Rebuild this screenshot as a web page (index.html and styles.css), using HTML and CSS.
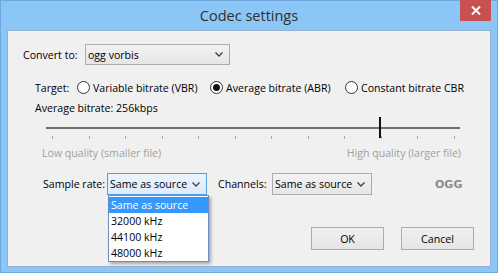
FILE: index.html
```html
<!DOCTYPE html>
<html>
<head>
<meta charset="utf-8">
<link rel="stylesheet" href="styles.css">
</head>
<body>
<div class="window">
  <div class="titlebar">Codec settings</div>
  <div class="close"><svg width="10" height="9" viewBox="0 0 10 9"><path d="M1 0.5 L9 8.5 M9 0.5 L1 8.5" stroke="#fff" stroke-width="2"/></svg></div>
  <div class="client">
    <div class="row convert">
      <span class="conv-label">Convert to:</span>
      <div class="select wide"><span>ogg vorbis</span><svg class="chev" width="8" height="5" viewBox="0 0 8 5"><path d="M0.5 0.5 L4 4 L7.5 0.5" fill="none" stroke="#444" stroke-width="1.4"/></svg></div>
    </div>
    <div class="row target">
      <span class="target-label">Target:</span>
      <label class="opt o1"><span class="radio"></span>Variable bitrate (VBR)</label>
      <label class="opt o2"><span class="radio on"></span>Average bitrate (ABR)</label>
      <label class="opt o3"><span class="radio"></span>Constant bitrate CBR</label>
    </div>
    <div class="row avg">Average bitrate: 256kbps</div>
    <div class="slider">
      <div class="track"></div>
      <div class="thumb"></div>
      <div class="ticks">
        <i></i><i></i><i></i><i></i><i></i><i></i><i></i><i></i><i></i><i></i><i></i><i></i>
      </div>
    </div>
    <div class="row quality">
      <span>Low quality (smaller file)</span>
      <span>High quality (larger file)</span>
    </div>
    <div class="row rates">
      <span class="sr-label">Sample rate:</span>
      <div class="select focus rate">
        <span>Same as source</span><svg class="chev" width="8" height="5" viewBox="0 0 8 5"><path d="M0.5 0.5 L4 4 L7.5 0.5" fill="none" stroke="#444" stroke-width="1.4"/></svg>
        <ul class="dropdown">
          <li class="sel">Same as source</li>
          <li>32000 kHz</li>
          <li>44100 kHz</li>
          <li>48000 kHz</li>
        </ul>
      </div>
      <span class="ch-label">Channels:</span>
      <div class="select rate"><span>Same as source</span><svg class="chev" width="8" height="5" viewBox="0 0 8 5"><path d="M0.5 0.5 L4 4 L7.5 0.5" fill="none" stroke="#444" stroke-width="1.4"/></svg></div>
      <span class="ogg">OGG</span>
    </div>
    <div class="row buttons">
      <div class="btn">OK</div>
      <div class="btn">Cancel</div>
    </div>
  </div>
</div>
</body>
</html>
```
FILE: styles.css
```css
* { box-sizing: border-box; }
html, body { margin: 0; padding: 0; }
body {
  width: 498px;
  height: 273px;
  overflow: hidden;
  font-family: "Open Sans", "Noto Sans", sans-serif;
  font-size: 10.6px;
  color: #000;
  white-space: nowrap;
}
.window {
  position: relative;
  width: 498px;
  height: 273px;
  background: #8cc6f7;
  border: 1px solid #6ea7dc;
  padding: 0 6px 5px 6px;
  display: flex;
  flex-direction: column;
}
.titlebar {
  height: 29px;
  flex: none;
  display: flex;
  align-items: center;
  justify-content: center;
  font-size: 14.5px;
  color: #2f2f2f;
  padding-bottom: 1px;
}
.close {
  position: absolute;
  top: -1px;
  right: 6px;
  width: 31px;
  height: 21px;
  background: #c75050;
  display: flex;
  align-items: center;
  justify-content: center;
}
.close svg { display: block; }
.client {
  flex: 1;
  background: #f0f0f0;
  border: 1px solid #95b1cf;
  display: flex;
  flex-direction: column;
  padding: 0 15px 0 15px;
}
.row { display: flex; align-items: center; }
.row > * { flex-shrink: 0; }
.convert { margin-top: 13px; height: 21px; }
.conv-label { width: 62px; }
.select {
  position: relative;
  height: 21px;
  border: 1px solid #acacac;
  background: linear-gradient(#f2f2f2, #e6e6e6);
  display: flex;
  align-items: center;
  justify-content: space-between;
  padding: 0 6px 0 2px;
}
.select.wide { width: 145px; }
.chev { display: block; flex-shrink: 0; }
.target { margin-top: 15px; height: 15px; padding-left: 12px; }
.target-label { width: 42px; }
.opt { display: flex; align-items: center; }
.o1 { width: 133px; }
.o2 { width: 135px; }
.radio {
  width: 13px;
  height: 13px;
  border-radius: 50%;
  border: 1px solid #333;
  background: #fff;
  margin-right: 3px;
  display: flex;
  align-items: center;
  justify-content: center;
}
.radio.on::after {
  content: "";
  width: 7px;
  height: 7px;
  border-radius: 50%;
  background: #111;
}
.avg { margin-top: 5px; height: 15px; padding-left: 12px; }
.slider {
  position: relative;
  height: 25px;
  margin: 5px 15px 0 23px;
}
.track {
  position: absolute;
  left: 0;
  right: 0;
  top: 7px;
  height: 2px;
  background: #6e6e6e;
}
.thumb {
  position: absolute;
  left: 333px;
  top: -3px;
  width: 2px;
  height: 21px;
  background: #111;
}
.ticks {
  position: absolute;
  left: 6px;
  right: 5px;
  top: 16px;
  display: flex;
  justify-content: space-between;
}
.ticks i {
  display: block;
  width: 1px;
  height: 3px;
  background: #a8a8a8;
}
.quality {
  margin-top: 0px;
  height: 15px;
  justify-content: space-between;
  padding: 0 14px 0 19px;
  color: #a0a0a0;
}
.rates { margin-top: 13px; height: 22px; padding-left: 20px; }
.sr-label { width: 64px; }
.select.rate { width: 100px; height: 22px; }
.select.focus {
  border-color: #569de5;
  background: linear-gradient(#ecf4fc, #dcecfc);
}
.dropdown {
  position: absolute;
  left: 0px;
  top: 21px;
  width: 101px;
  margin: 0;
  padding: 1px 0 0 0;
  list-style: none;
  background: #fff;
  border: 1px solid #6b8fc4;
  box-shadow: 2px 2px 3px rgba(0,0,0,0.3);
  z-index: 2;
}
.dropdown li {
  height: 16px;
  line-height: 16px;
  padding-left: 2px;
}
.dropdown li.sel { background: #3399ff; color: #fff; }
.ch-label { margin-left: 11px; width: 54px; }
.ogg {
  margin-left: 63px;
  font-family: "DejaVu Sans", sans-serif;
  font-weight: bold;
  font-size: 11px;
  color: #8c8c8c;
}
.buttons {
  margin-top: 32px;
  justify-content: flex-end;
  gap: 17px;
  padding-right: 1px;
}
.btn {
  width: 73px;
  height: 23px;
  border: 1px solid #acacac;
  background: linear-gradient(#f0f0f0, #e5e5e5);
  display: flex;
  align-items: center;
  justify-content: center;
}
```
